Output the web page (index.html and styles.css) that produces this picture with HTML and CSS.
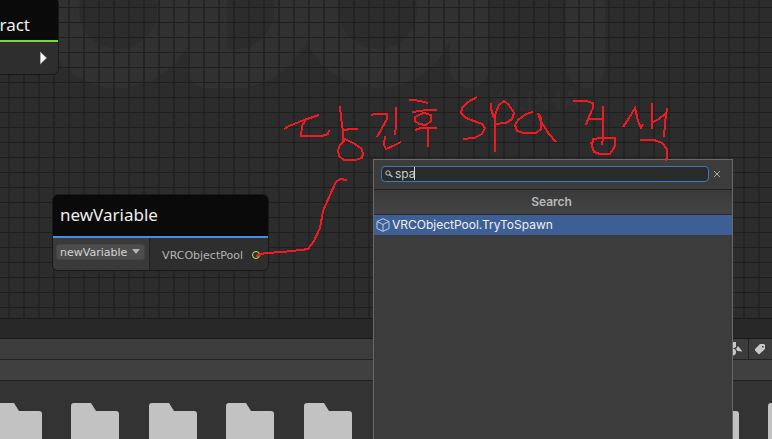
FILE: index.html
```html
<!DOCTYPE html>
<html lang="ko">
<head>
<meta charset="utf-8">
<title>Udon Graph</title>
<link rel="stylesheet" href="styles.css">
</head>
<body>
<main class="editor">
  <section class="canvas">
    <svg class="watermark" aria-hidden="true">
      <g class="mark">
        <circle cx="118" cy="10" r="58.5"/>
        <path d="M207 -20V68.500H235A58.500 58.500 0 0 0 235 -48.500"/>
        <circle cx="378" cy="10" r="58.500"/>
        <path class="leg" d="M469.500 -20V68.500M585.500 -20V68.500"/>
      </g>
    </svg>
    <span class="stage">ALPHA</span>
    <div class="grid"></div>

    <article class="node node-abstract">
      <h2 class="node-title">ract</h2>
      <div class="node-body">
        <svg class="flow" width="8" height="14" viewBox="0 0 8 14"><path d="M0 0.500L7 7L0 13.500Z" fill="#aaa"/><path d="M1 2L6 7L1 12Z" fill="#fff"/></svg>
      </div>
    </article>

    <article class="node node-variable">
      <h2 class="node-title">newVariable</h2>
      <div class="node-body">
        <div class="node-input">
          <select class="picker" aria-label="Variable"><option>newVariable</option></select>
        </div>
        <div class="node-output">
          <span>VRCObjectPool</span>
          <i class="port"></i>
        </div>
      </div>
    </article>
  </section>

  <section class="project">
    <div class="tabs"></div>
    <div class="toolbar">
      <button class="tool" aria-label="Filter by type">
        <svg width="14" height="14" viewBox="0 0 14 14" fill="#c8c8c8"><path d="M2 0H7V5L5 6H2Z"/><circle cx="3.500" cy="10" r="3.500"/><path d="M9 4L13.500 9.500L8.500 9L7 7Z"/></svg>
      </button>
      <button class="tool" aria-label="Filter by label">
        <svg width="12" height="12" viewBox="0 0 12 12" fill="#c8c8c8"><path fill-rule="evenodd" d="M6 1L10 1L11 2L11 6L5 11.500L1 7.500L1 6ZM8 3V4.500H9.500V3Z"/></svg>
      </button>
    </div>
    <div class="crumbs"></div>
    <div class="folders">
      <svg class="folder" viewBox="0 0 48 40"><path d="M0 40V3Q0 0 3 0H20L25 8H45Q48 8 48 11V40Z"/></svg>
      <svg class="folder" viewBox="0 0 48 40"><path d="M0 40V3Q0 0 3 0H20L25 8H45Q48 8 48 11V40Z"/></svg>
      <svg class="folder" viewBox="0 0 48 40"><path d="M0 40V3Q0 0 3 0H20L25 8H45Q48 8 48 11V40Z"/></svg>
      <svg class="folder" viewBox="0 0 48 40"><path d="M0 40V3Q0 0 3 0H20L25 8H45Q48 8 48 11V40Z"/></svg>
      <svg class="folder" viewBox="0 0 48 40"><path d="M0 40V3Q0 0 3 0H20L25 8H45Q48 8 48 11V40Z"/></svg>
      <svg class="folder" viewBox="0 0 48 40"><path d="M0 40V3Q0 0 3 0H20L25 8H45Q48 8 48 11V40Z"/></svg>
      <svg class="folder" viewBox="0 0 48 40"><path d="M0 40V3Q0 0 3 0H20L25 8H45Q48 8 48 11V40Z"/></svg>
      <svg class="folder" viewBox="0 0 48 40"><path d="M0 40V3Q0 0 3 0H20L25 8H45Q48 8 48 11V40Z"/></svg>
      <svg class="folder" viewBox="0 0 48 40"><path d="M0 40V3Q0 0 3 0H20L25 8H45Q48 8 48 11V40Z"/></svg>
      <svg class="folder" viewBox="0 0 48 40"><path d="M0 40V3Q0 0 3 0H20L25 8H45Q48 8 48 11V40Z"/></svg>
      <svg class="folder" viewBox="0 0 48 40"><path d="M0 40V3Q0 0 3 0H20L25 8H45Q48 8 48 11V40Z"/></svg>
    </div>
  </section>

  <aside class="search">
    <div class="search-bar">
      <div class="field">
        <svg width="8" height="8" viewBox="0 0 8 8" fill="none" stroke="#c4c4c4"><circle cx="3" cy="3" r="2.200"/><path d="M4.500 4.500L7.500 7" stroke-width="1.500"/></svg>
        <input class="query" type="text" value="spa" aria-label="Search nodes">
        <i class="caret"></i>
      </div>
      <button class="clear" aria-label="Clear">
        <svg width="8" height="8" viewBox="0 0 8 8" stroke="#aaa"><path d="M1 1L7 7M7 1L1 7"/></svg>
      </button>
    </div>
    <h3 class="search-title">Search</h3>
    <button class="result">
      <svg width="14" height="14" viewBox="0 0 14 14" fill="none" stroke="#c4ccd8" stroke-linejoin="round"><path d="M7 0.700L13 3.500V10.500L7 13.300L1 10.500V3.500ZM1 3.500L7 6.500L13 3.500M7 6.500V13.300"/></svg>
      <span>VRCObjectPool.TryToSpawn</span>
    </button>
  </aside>

  <svg class="ink" role="img" aria-label="당긴후 spa 검색">
    <path d="M284 129L289 126L304 120L319 115M305 121L302 126L301 136H322L328 134L329 130"/>
    <path d="M340 106L341 118L343 131V142M344 130L351 129H358M343 141L345 139L353 143L361 148L363 153L362 158L355 160L344 160L339 156L338 150L340 145L344 141"/>
    <path d="M371 115L375 114H387V119L381 130L377 137M396 107V126L395 135M385 136L384 145L386 149L395 145L401 142"/>
    <path d="M409 100H414L420 101L428 103M412 112L427 110H437M421 114L415 117L415 121L419 124L426 125L431 121L431 115L424 113ZM415 130L421 128H437M428 129V147"/>
    <path d="M477 97L468 102L462 108L461 113L466 118L474 121L482 124L485 128L482 134L474 138L463 139"/>
    <path d="M491 103V109L494 118M495 152V115L499 105L504 101L509 105L514 113L512 119L506 123L495 124"/>
    <path d="M533 112L526 114L518 120L515 125L517 131L524 133H536L541 129L541 118L538 113L540 120L549 134L556 142"/>
    <path d="M573 101H586L593 103V108L588 119L586 125M588 119H604M603 106V138L602 145M591 142L594 152L600 154H610L615 146V138H601L593 139L592 148"/>
    <path d="M623 127L629 118L635 108L638 121L641 128L643 124M652 103V129M653 122L659 119L665 114M667 108L665 123L664 137M640 140H654L662 143L667 149V156L666 161"/>
    <path d="M256 256L265 253L283 252L301 250L308 249L314 241L320 228L323 211L330 195L336 182L340 179L347 180"/>
  </svg>
</main>
</body>
</html>
```
FILE: styles.css
```css
* {
  box-sizing: border-box;
}

body {
  margin: 0;
  background: #2c2c2c;
  font-family: Inter, "Noto Sans CJK KR", sans-serif;
  color: #c4c4c4;
}

button {
  margin: 0;
  padding: 0;
  border: 0;
  background: none;
  color: inherit;
  font: inherit;
}

.editor {
  position: relative;
  display: flex;
  flex-direction: column;
  height: 100vh;
  overflow: hidden;
}

/* Graph canvas */
.canvas {
  position: relative;
  flex: 1;
  overflow: hidden;
  background: #2c2c2c;
}

.watermark,
.grid,
.ink {
  position: absolute;
  inset: 0;
  width: 100%;
  height: 100%;
  pointer-events: none;
}

.mark {
  fill: none;
  stroke: #313131;
  stroke-width: 39;
  stroke-linejoin: round;
}

.leg {
  stroke-linecap: round;
}

.stage {
  position: absolute;
  left: 492px;
  top: 84px;
  color: #303032;
  font-size: 26px;
  line-height: 34px;
  font-weight: 600;
}

.grid {
  background-image:
    linear-gradient(#1f1f1f 1px, transparent 1px),
    linear-gradient(90deg, #242424 2px, transparent 2px);
  background-size: 15px 15px;
  background-position: 0 7px, 8px 0;
}

/* Nodes */
.node {
  position: absolute;
  overflow: hidden;
  border: 1px solid #191919;
  border-radius: 6px;
  background: #2e2e2e;
  font-family: "Noto Sans", sans-serif;
}

.node-abstract {
  left: -60px;
  top: -3px;
  width: 119px;
}

.node-variable {
  left: 52px;
  top: 194px;
  width: 217px;
}

.node-title {
  height: 43px;
  margin: 0;
  padding: 0 7px;
  background: #0a0a0a;
  color: #eee;
  font-size: 17px;
  line-height: 40px;
  font-weight: 400;
  border-bottom: 2px solid #4a8ae0;
}

.node-abstract .node-title {
  height: 44px;
  padding-right: 28px;
  text-align: right;
  line-height: 54px;
  border-color: #79d83a;
}

.node-body {
  display: flex;
  height: 32px;
}

.node-abstract .node-body {
  align-items: center;
  justify-content: flex-end;
  padding-right: 10px;
}

.node-input {
  display: flex;
  align-items: flex-start;
  width: 97px;
  padding: 6px 4px 6px 3px;
  border-right: 1px solid #202020;
  background: #3a3a3a;
}

.picker {
  appearance: none;
  width: 100%;
  height: 16px;
  padding: 0 0 0 3px;
  border: 1px solid #444;
  border-radius: 3px;
  background: #4d4d4d;
  color: #d4d4d4;
  font-family: "DejaVu Sans", sans-serif;
  font-size: 11px;
  line-height: 15px;
}

.node-input::after {
  content: "";
  width: 8px;
  height: 5px;
  margin: 5px 5px 0 -13px;
  flex: none;
  background: #b4b4b4;
  clip-path: polygon(0 0, 100% 0, 50% 100%);
}

.node-output {
  display: flex;
  flex: 1;
  align-items: center;
  justify-content: flex-end;
  gap: 9px;
  padding: 2px 8px 0 0;
  color: #b4b4b4;
  font-family: "DejaVu Sans", sans-serif;
  font-size: 11px;
}

.port {
  width: 8px;
  height: 8px;
  border: 1px solid #c8e650;
  border-radius: 50%;
}

/* Project panel */
.project {
  flex: none;
  border-top: 1px solid #191919;
  background: #333;
}

.tabs {
  height: 20px;
  border-bottom: 1px solid #191919;
  background: #282828;
}

.toolbar {
  display: flex;
  justify-content: flex-end;
  height: 21px;
  border-bottom: 1px solid #232323;
  background: #3c3c3c;
}

.tool {
  display: flex;
  align-items: center;
  justify-content: center;
  width: 24px;
  padding-right: 2px;
  border-left: 1px solid #232323;
}

.crumbs {
  height: 21px;
  border-bottom: 1px solid #232323;
  background: #404040;
}

.folders {
  display: flex;
  justify-content: space-between;
  height: 58px;
  margin: 0 -44px 0 -6px;
  padding-top: 22px;
}

.folder {
  width: 48px;
  height: 40px;
  flex: none;
  fill: #c2c2c2;
}

/* Node search popup */
.search {
  position: absolute;
  left: 373px;
  top: 159px;
  bottom: 0;
  width: 360px;
  border: 1px solid #696969;
  border-bottom: 0;
  background: #3c3c3c;
}

.search-bar {
  display: flex;
  align-items: center;
  height: 30px;
  padding: 0 11px 2px 7px;
  gap: 3px;
  border-bottom: 1px solid #212121;
}

.field {
  position: relative;
  display: flex;
  flex: 1;
  align-items: center;
  gap: 2px;
  height: 16px;
  padding-left: 3px;
  border: 1px solid #3a79bb;
  border-radius: 4px;
  background: #2a2a2a;
}

.query {
  flex: 1;
  min-width: 0;
  padding: 0;
  border: 0;
  outline: 0;
  background: none;
  color: #c8c8c8;
  font: 12px/14px Inter, sans-serif;
}

.caret {
  position: absolute;
  left: 32px;
  top: 0;
  width: 1px;
  height: 13px;
  background: #d8d8d8;
}

.clear {
  display: flex;
  align-items: center;
  justify-content: center;
  width: 9px;
  height: 16px;
}

.search-title {
  height: 25px;
  margin: 0;
  padding-right: 3px;
  border-bottom: 1px solid #2b2b2b;
  background: linear-gradient(#3a3a3a, #434343);
  color: #b8b8b8;
  font-size: 12px;
  line-height: 24px;
  font-weight: 600;
  text-align: center;
}

.result {
  display: flex;
  align-items: center;
  gap: 2px;
  width: 100%;
  height: 20px;
  padding-left: 2px;
  background: #3e5f96;
  color: #f0f0f0;
  font-size: 12px;
  line-height: 20px;
}

/* Handwritten notes */
.ink {
  fill: none;
  stroke: #ed1c24;
  stroke-width: 2;
  shape-rendering: crispEdges;
}
```
